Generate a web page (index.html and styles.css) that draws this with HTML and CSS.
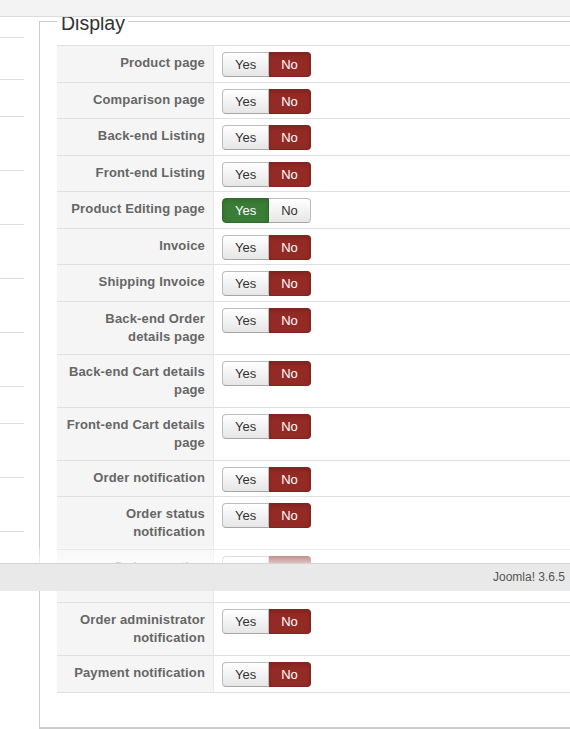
FILE: index.html
```html
<!DOCTYPE html>
<html lang="en">
<head>
    <meta charset="utf-8">
    <title>Display</title>
    <link rel="stylesheet" href="styles.css">
</head>
<body>
<div class="topbar"></div>
<div class="page">
    <ul class="sidenav">
        <li class="first"></li>
        <li class="mid"></li>
        <li class="low"></li>
        <li></li>
        <li></li>
        <li></li>
        <li></li>
        <li></li>
        <li class="low"></li>
        <li></li>
        <li></li>
    </ul>
    <fieldset class="panel">
        <legend>Display</legend>
        <table class="options" cellspacing="0" cellpadding="0">
            <tr>
                <td class="label">Product page</td>
                <td class="value"><div class="toggle"><span class="opt">Yes</span><span class="opt no">No</span></div></td>
            </tr>
            <tr>
                <td class="label">Comparison page</td>
                <td class="value"><div class="toggle"><span class="opt">Yes</span><span class="opt no">No</span></div></td>
            </tr>
            <tr>
                <td class="label">Back-end Listing</td>
                <td class="value"><div class="toggle"><span class="opt">Yes</span><span class="opt no">No</span></div></td>
            </tr>
            <tr>
                <td class="label">Front-end Listing</td>
                <td class="value"><div class="toggle"><span class="opt">Yes</span><span class="opt no">No</span></div></td>
            </tr>
            <tr>
                <td class="label">Product Editing page</td>
                <td class="value"><div class="toggle"><span class="opt yes">Yes</span><span class="opt">No</span></div></td>
            </tr>
            <tr>
                <td class="label">Invoice</td>
                <td class="value"><div class="toggle"><span class="opt">Yes</span><span class="opt no">No</span></div></td>
            </tr>
            <tr>
                <td class="label">Shipping Invoice</td>
                <td class="value"><div class="toggle"><span class="opt">Yes</span><span class="opt no">No</span></div></td>
            </tr>
            <tr>
                <td class="label">Back-end Order details page</td>
                <td class="value"><div class="toggle"><span class="opt">Yes</span><span class="opt no">No</span></div></td>
            </tr>
            <tr>
                <td class="label">Back-end Cart details page</td>
                <td class="value"><div class="toggle"><span class="opt">Yes</span><span class="opt no">No</span></div></td>
            </tr>
            <tr>
                <td class="label">Front-end Cart details page</td>
                <td class="value"><div class="toggle"><span class="opt">Yes</span><span class="opt no">No</span></div></td>
            </tr>
            <tr>
                <td class="label">Order notification</td>
                <td class="value"><div class="toggle"><span class="opt">Yes</span><span class="opt no">No</span></div></td>
            </tr>
            <tr>
                <td class="label">Order status notification</td>
                <td class="value"><div class="toggle"><span class="opt">Yes</span><span class="opt no">No</span></div></td>
            </tr>
            <tr>
                <td class="label">Order creation notification</td>
                <td class="value"><div class="toggle"><span class="opt">Yes</span><span class="opt no">No</span></div></td>
            </tr>
            <tr>
                <td class="label">Order administrator notification</td>
                <td class="value"><div class="toggle"><span class="opt">Yes</span><span class="opt no">No</span></div></td>
            </tr>
            <tr>
                <td class="label">Payment notification</td>
                <td class="value"><div class="toggle"><span class="opt">Yes</span><span class="opt no">No</span></div></td>
            </tr>
        </table>
    </fieldset>
</div>
<div class="fade"></div>
<div class="status">Joomla! 3.6.5</div>
</body>
</html>
```

FILE: styles.css
```css
* {
    margin: 0;
    padding: 0;
    box-sizing: border-box;
}
html,body {
    height: 100%;
}
body {
    position: relative;
    overflow: hidden;
    background-color: #fff;
    font-family: "Liberation Sans", Arial, sans-serif;
    font-size: 13px;
    color: #333;
}
.topbar {
    position: absolute;
    left: 0;
    top: 0;
    width: 100%;
    height: 17px;
    background-color: #f3f3f3;
    border-bottom: 1px solid #dcdcdc;
    z-index: 2;
}
.page {
    display: flex;
    gap: 15px;
    align-items: flex-start;
}
.sidenav {
    list-style: none;
    width: 24px;
    flex: none;
}
.sidenav li {
    height: 54px;
    border-bottom: 1px solid #dedede;
}
.sidenav li.first {
    height: 38px;
}
.sidenav li.mid {
    height: 42px;
}
.sidenav li.low {
    height: 37px;
}
.panel {
    flex: none;
    width: 620px;
    margin-top: 7px;
    padding: 10px 17px 34px;
    border: 1px solid #cbcbcb;
    border-bottom-width: 2px;
}
.panel legend {
    padding: 4px 3px 0 4px;
    font-size: 19.5px;
    line-height: 24px;
    color: #333;
}
.options {
    width: 100%;
    border-collapse: separate;
    border-spacing: 0;
}
.options td {
    vertical-align: top;
    border-top: 1px solid #e0e0e0;
}
.options tr:last-child td {
    border-bottom: 1px solid #e0e0e0;
}
.options td.label {
    width: 157px;
    padding: 8px 8px;
    background-color: #f5f5f5;
    border-right: 1px solid #e8e8e8;
    text-align: right;
    font-weight: bold;
    line-height: 18px;
    letter-spacing: 0.15px;
    color: #666;
}
.options td.value {
    padding: 6px 8px 4.5px;
}
.toggle {
    display: flex;
}
.toggle .opt {
    display: block;
    padding: 3px 12px;
    font-size: 13px;
    line-height: 17px;
    color: #333;
    background: linear-gradient(#fff, #e6e6e6);
    border: 1px solid #bdbdbd;
    border-bottom-color: #a5a5a5;
    box-shadow: inset 0 1px 0 rgba(255,255,255,.2);
}
.toggle .opt:first-child {
    border-radius: 4px 0 0 4px;
}
.toggle .opt:last-child {
    border-left: 0;
    border-radius: 0 4px 4px 0;
}
.toggle .opt.no {
    color: #fff;
    background: #942a25;
    border-color: #7f2420;
    box-shadow: inset 0 2px 4px rgba(0,0,0,.15);
}
.toggle .opt.yes {
    color: #fff;
    background: #3a7d36;
    border-color: #2f6a2c;
    box-shadow: inset 0 2px 4px rgba(0,0,0,.15);
}
.fade {
    position: absolute;
    left: 0;
    top: 546px;
    width: 100%;
    height: 17px;
    background: linear-gradient(rgba(255,255,255,.2), rgba(255,255,255,.7));
}
.status {
    position: absolute;
    left: 0;
    top: 563px;
    width: 100%;
    height: 28px;
    padding-right: 5px;
    background-color: #e9e9e9;
    border-top: 1px solid #d4d4d4;
    text-align: right;
    font-size: 12px;
    line-height: 27px;
    color: #555;
}
```
